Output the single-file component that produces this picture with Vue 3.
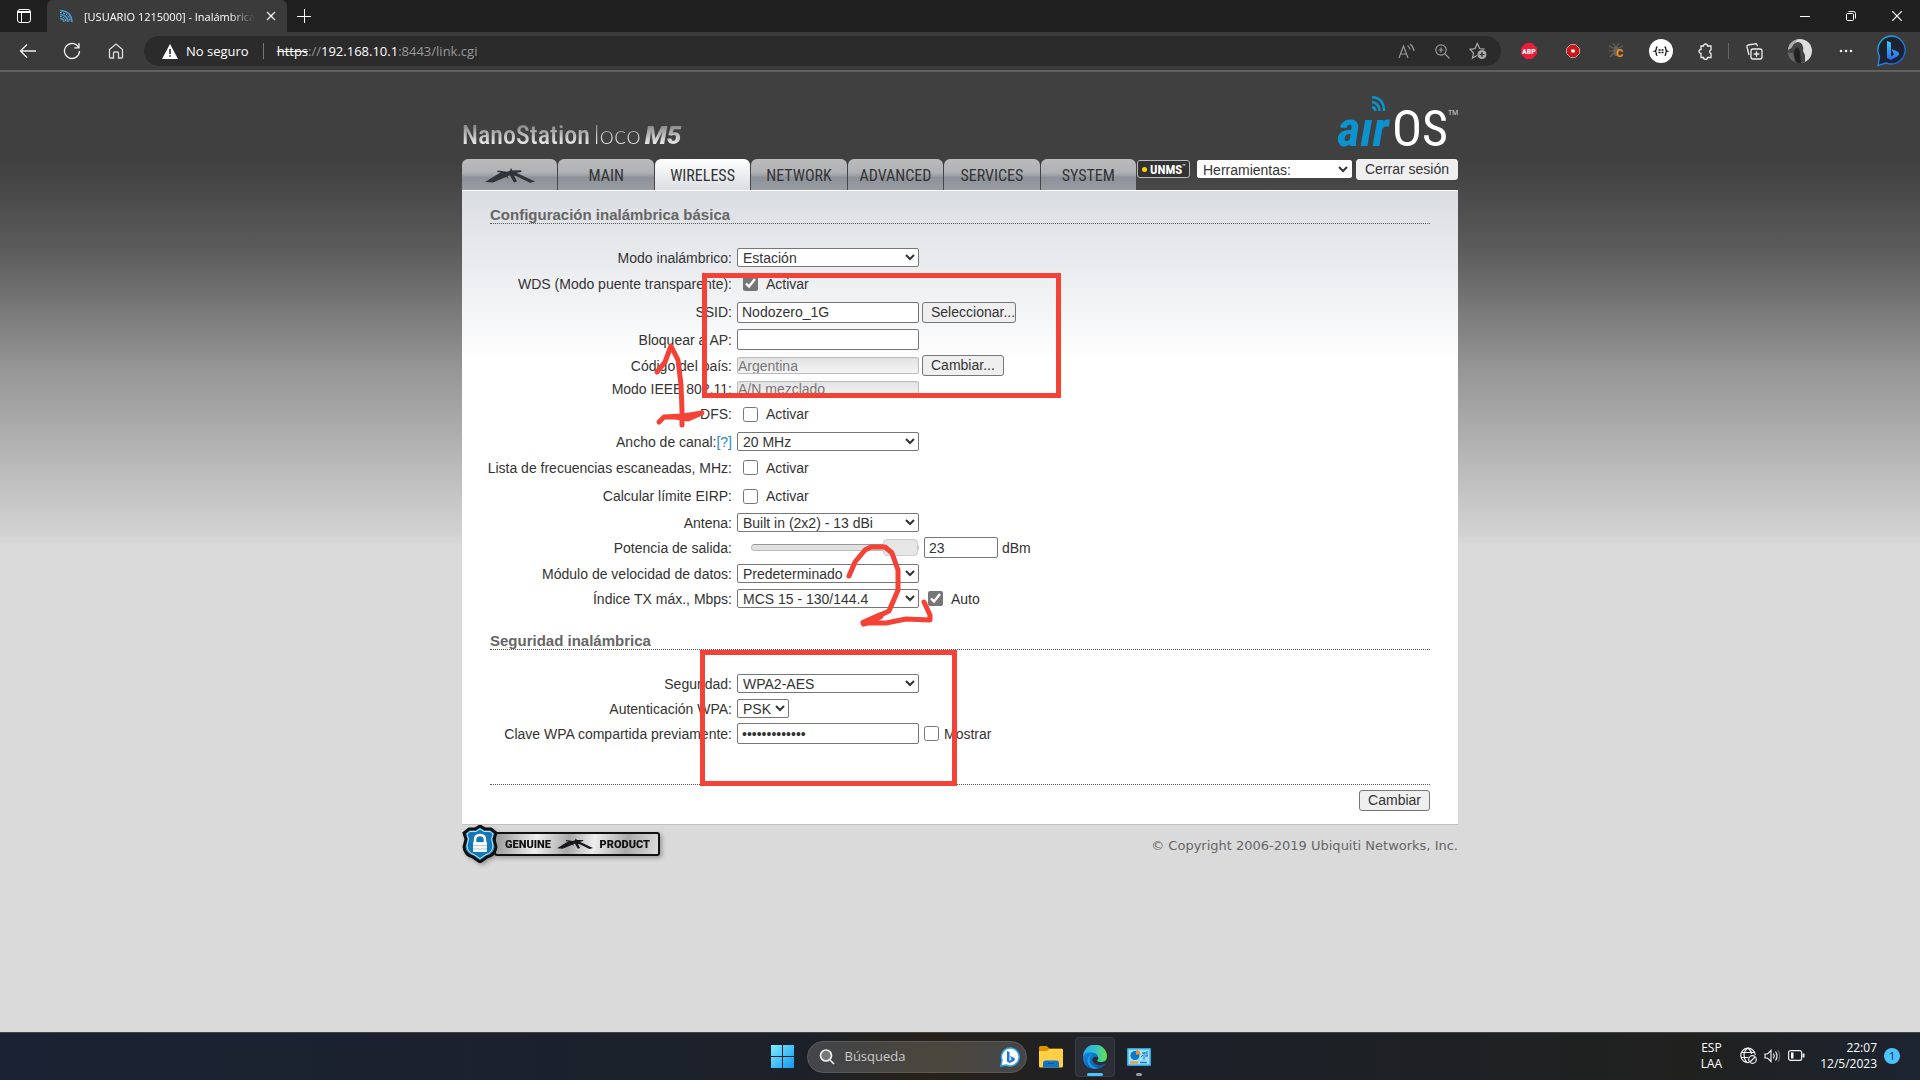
<script setup>
import { ref } from 'vue'

const tabs = ['', 'MAIN', 'WIRELESS', 'NETWORK', 'ADVANCED', 'SERVICES', 'SYSTEM']
const active = ref('WIRELESS')
const wds = ref(true)
const ssid = ref('Nodozero_1G')
const lockAp = ref('')
const dfs = ref(false)
const scanList = ref(false)
const eirp = ref(false)
const power = ref('23')
const auto = ref(true)
const psk = ref('clavesecreta1')
const show = ref(false)
</script>

<template>
  <div class="screen">
    <header class="browser">
      <div class="tabstrip">
        <button class="tab-menu" aria-label="Menú de pestañas">
          <svg width="16" height="16" viewBox="0 0 16 16" fill="none" stroke="#fff"><rect x="1.5" y="1.5" width="13" height="13" rx="2.5" /><path d="M2 3.5h12M2 4.5h12M5.500 5v9" /></svg>
        </button>
        <div class="browser-tab">
          <svg class="favicon" width="14" height="14" viewBox="0 0 14 14" fill="none" stroke="#3d9ad6" stroke-width="1.600"><path d="M1 1.500Q12.500 2 13 13M1 5.500Q8.500 6 9 13M1 9.500Q5 10 5 13" /><path d="M1 3.500Q10.500 4 11 13M1 7.500Q6.500 8 7 13" stroke-width=".8" stroke="#a9d6f2" stroke-dasharray="2 1" /></svg>
          <span class="tab-title">[USUARIO 1215000] - Inalámbrica</span>
          <button class="tab-close" aria-label="Cerrar pestaña"><svg width="10" height="10" viewBox="0 0 10 10" stroke="#fff" stroke-width="1.300"><path d="M1 1l8 8M9 1l-8 8" /></svg></button>
        </div>
        <button class="new-tab" aria-label="Nueva pestaña"><svg width="14" height="14" viewBox="0 0 14 14" stroke="#fff"><path d="M7.500 0v14M0 7.500h14" /></svg></button>
        <div class="window-buttons">
          <button aria-label="Minimizar"><svg width="10" height="10" viewBox="0 0 10 10" stroke="#fff"><path d="M0 5.500h10" /></svg></button>
          <button aria-label="Restaurar"><svg width="10" height="10" viewBox="0 0 10 10" stroke="#fff" fill="none"><rect x=".5" y="2.500" width="7" height="7" rx="1" /><path d="M2.500 .5h5q2 0 2 2v5" /></svg></button>
          <button aria-label="Cerrar"><svg width="10" height="10" viewBox="0 0 10 10" stroke="#fff" stroke-width="1.200"><path d="M0 0l10 10M10 0L0 10" /></svg></button>
        </div>
      </div>
      <div class="toolbar">
        <button class="nav-btn" aria-label="Atrás"><svg width="18" height="16" viewBox="0 0 18 16" fill="none" stroke="#eee" stroke-width="1.300"><path d="M17 8H1.500M8 1.500L1.500 8L8 14.500" /></svg></button>
        <button class="nav-btn" aria-label="Actualizar"><svg width="18" height="18" viewBox="0 0 18 18" fill="none" stroke="#eee" stroke-width="1.300"><path d="M16.500 9a7.500 7.500 0 1 1-2.600-5.700L16 5.500M16 1v4.800h-4.800" /></svg></button>
        <button class="nav-btn" aria-label="Inicio"><svg width="16" height="16" viewBox="0 0 16 16" fill="none" stroke="#ddd" stroke-width="1.300"><path d="M1.500 6.500L8 1l6.500 5.500V14q0 1-1 1H10.500V10q0-1-1-1h-3q-1 0-1 1v5H2.500q-1 0-1-1z" /></svg></button>
        <div class="address">
          <svg width="16" height="15" viewBox="0 0 16 15"><path d="M8 0l8 15H0z" fill="#fff" /><path d="M7.200 5h1.600v5H7.200zM7.200 11.200h1.600v1.600H7.200z" fill="#2b2b2b" /></svg>
          <span class="insecure">No seguro</span>
          <span class="sep"></span>
          <span class="url"><s>https</s>://<b>192.168.10.1</b>:8443/link.cgi</span>
          <span class="address-icons">
            <button aria-label="Leer en voz alta"><svg width="17" height="16" viewBox="0 0 17 16" fill="none" stroke="#999" stroke-width="1.200"><path d="M1 15L5.500 3L10 15M2.500 11h6M9.500 2.500q2 1.500 2.500 4M12 1q3.500 2.500 4 7" /></svg></button>
            <button aria-label="Zoom"><svg width="15" height="15" viewBox="0 0 15 15" fill="none" stroke="#999" stroke-width="1.200"><circle cx="6" cy="6" r="5.200" /><path d="M10 10l4.500 4.500M6 3.500v5M3.500 6h5" /></svg></button>
            <button aria-label="Favoritos"><svg width="18" height="18" viewBox="0 0 18 18" fill="none" stroke="#aaa" stroke-width="1.200"><path d="M8 13.500L3.500 16l1-5L1 7.200l5-.6L8.300 1.500l2.300 5 5 .7" /><circle cx="13" cy="12.500" r="4.500" fill="#aaa" stroke="none" /><path d="M13 10v5M10.500 12.500h5" stroke="#2b2b2b" /></svg></button>
          </span>
        </div>
        <div class="extensions">
          <button aria-label="Adblock Plus"><svg width="16" height="16" viewBox="0 0 16 16"><path d="M5 0h6l5 5v6l-5 5H5l-5-5V5z" fill="#ee1c3c" /><text x="8" y="11" text-anchor="middle" font-family="Roboto Condensed, Roboto, sans-serif" font-size="8" font-weight="700" fill="#fff">ABP</text></svg></button>
          <button aria-label="Grabador"><svg width="14" height="14" viewBox="0 0 14 14"><path d="M4.500 .5h5l4 4v5l-4 4h-5l-4-4v-5z" fill="#d01418" stroke="#aaa" /><rect x="5" y="5.500" width="4" height="3" rx="1" fill="#fff" /></svg></button>
          <button aria-label="Depurador"><svg width="18" height="20" viewBox="0 0 18 20" fill="none" stroke="#6d6258" stroke-width="1.200"><ellipse cx="8" cy="10" rx="2.500" ry="5" fill="#6d6258" stroke="none" /><path d="M5 2l2 3M11 2L9 5M1 5l4 2 6 0 4-2M1 10h5M2 16l4-4M11 10h3" /><text x="8" y="16" font-family="Roboto, sans-serif" font-size="11" font-weight="700" fill="#f79324" stroke="none">C</text></svg></button>
          <button aria-label="JSON"><svg width="24" height="24" viewBox="0 0 24 24"><circle cx="12" cy="12" r="12" fill="#fff" /><path d="M8.500 8Q7 8 7.300 10q0 1.800-1.500 2.200 1.500.4 1.500 2.300-.3 1.900 1.200 1.900M15.500 8q1.500 0 1.200 2 0 1.800 1.500 2.200-1.500.4-1.500 2.300.3 1.900-1.200 1.900" fill="none" stroke="#111" stroke-width="1.300" /><path d="M9.500 11h5M9.500 13.500h5" stroke="#111" stroke-width="1.300" stroke-dasharray="2 1" /></svg></button>
          <button aria-label="Extensiones"><svg width="15" height="17" viewBox="0 0 15 17" fill="none" stroke="#eee" stroke-width="1.300"><path d="M3 3h2.500a2 2 0 0 1 4 0H13v3.800a2 2 0 0 0 0 3.800V14.500H9.500a2 2 0 0 1-4 0H3V10.500a2 2 0 0 1 0-4z" /></svg></button>
        </div>
        <span class="bar-sep"></span>
        <div class="profile">
          <button aria-label="Colecciones"><svg width="17" height="17" viewBox="0 0 17 17" fill="none" stroke="#eee" stroke-width="1.300"><rect x="5" y="6" width="11" height="10" rx="2" /><path d="M10.500 8.200v5.600M7.700 11h5.600M3 12L1 4q-.4-1.600 1-2l7-1.200q1.500-.2 2 1l.5 1.500" /></svg></button>
          <button aria-label="Perfil"><svg width="24" height="24" viewBox="0 0 24 24"><defs><clipPath id="avatar"><circle cx="12" cy="12" r="12" /></clipPath></defs><g clip-path="url(#avatar)"><rect width="24" height="24" fill="#ddd" /><path d="M0 0h9l-2 5L0 11z" fill="#aaa" /><path d="M0 11Q4 9 6 5q4-4 8 0 2 4 1 7l2 4v8H0z" fill="#444" /><path d="M7 10l3-2 2 5 1 11H8L6 15z" fill="#222" /><path d="M0 14h5l2 10H0z" fill="#666" /></g></svg></button>
          <button aria-label="Más"><svg width="14" height="4" viewBox="0 0 14 4" fill="#eee"><circle cx="2" cy="2" r="1.300" /><circle cx="7" cy="2" r="1.300" /><circle cx="12" cy="2" r="1.300" /></svg></button>
          <button aria-label="Bing"><svg width="30" height="32" viewBox="0 0 30 32"><defs><linearGradient id="bingRing" x2="1" y2="1"><stop stop-color="#27b4dd" /><stop offset="1" stop-color="#1b55dd" /></linearGradient><linearGradient id="bingB" x2="0" y2="1"><stop stop-color="#3ad0f4" /><stop offset="1" stop-color="#2867ef" /></linearGradient></defs><path d="M15 1a14 14 0 1 1-6 27L1 30.500l1.500-9A14 14 0 0 1 15 1z" fill="#1c2230" stroke="url(#bingRing)" stroke-width="1.400" /><path d="M10 6l4 1.500v14l-4-2zM14 21.500l3-2-2.500-5.500 7 3q1.500 2-.5 4l-7 4-4-2v-3.500z" fill="url(#bingB)" /></svg></button>
        </div>
      </div>
    </header>

    <main class="page">
      <div class="device">
        <div class="brand">
          <div class="product"><span class="nano">NanoStation</span><span class="loco">loco</span><span class="m5">M5</span></div>
          <div class="airos">
            <span class="air">aır<svg class="waves" width="18" height="18" viewBox="0 0 18 18" fill="none" stroke="#0a93cf" stroke-width="2.400"><path d="M3 2Q15 3 15 16M3 7q7 1 7.500 9M3 12q3 .5 3.500 4" /></svg></span><span class="os">OS</span><sup class="tm">TM</sup>
          </div>
        </div>
        <nav class="nav">
          <div class="tabs">
            <button v-for="t in tabs" :key="t" class="tab" :class="{ active: t === active }" @click="active = t || active">
              <template v-if="t">{{ t }}</template>
              <svg v-else width="50" height="16" viewBox="0 0 50 16" fill="#30333a"><path d="M0 14L13 6l3-1.500-4-.5 1-1.500 9 1.200 3-1L26 0l1.500 2.500L36 2.300l.5 1.700-5 .8L36 7l14 6.500-5 1.300L31 8l-2-.5 3 6-3 1-4-7-2.500.5 1 2.500-2.500-1.500L8 14.500z" /></svg>
            </button>
          </div>
          <a class="unms" href="#unms"><span class="dot"></span>UNMS<sup>™</sup></a>
          <select class="tools" aria-label="Herramientas"><option>Herramientas:</option></select>
          <button class="btn logout">Cerrar sesión</button>
        </nav>

        <form class="panel" @submit.prevent>
          <h2>Configuración inalámbrica básica</h2>
          <div class="rows basic">
            <div class="row"><label for="mode">Modo inalámbrico:</label><div class="field"><select id="mode"><option>Estación</option></select></div></div>
            <div class="row md"><span class="name">WDS (Modo puente transparente):</span><div class="field"><label class="check"><input v-model="wds" type="checkbox">Activar</label></div></div>
            <div class="row lg"><label for="ssid">SSID:</label><div class="field"><input id="ssid" v-model="ssid" type="text"><button class="btn browse">Seleccionar...</button></div></div>
            <div class="row"><label for="ap">Bloquear a AP:</label><div class="field"><input id="ap" v-model="lockAp" type="text"></div></div>
            <div class="row md"><label for="country">Código del país:</label><div class="field"><input id="country" class="fixed" type="text" value="Argentina" disabled><button class="btn">Cambiar...</button></div></div>
            <div class="row xs"><label for="ieee">Modo IEEE 802.11:</label><div class="field"><input id="ieee" class="fixed" type="text" value="A/N mezclado" disabled></div></div>
            <div class="row lg"><span class="name">DFS:</span><div class="field"><label class="check"><input v-model="dfs" type="checkbox">Activar</label></div></div>
            <div class="row"><label for="width">Ancho de canal:<a href="#ayuda">[?]</a></label><div class="field"><select id="width"><option>20 MHz</option></select></div></div>
            <div class="row md"><span class="name">Lista de frecuencias escaneadas, MHz:</span><div class="field"><label class="check"><input v-model="scanList" type="checkbox">Activar</label></div></div>
            <div class="row lg"><span class="name">Calcular límite EIRP:</span><div class="field"><label class="check"><input v-model="eirp" type="checkbox">Activar</label></div></div>
            <div class="row sm"><label for="antenna">Antena:</label><div class="field"><select id="antenna"><option>Built in (2x2) - 13 dBi</option></select></div></div>
            <div class="row md"><label for="power">Potencia de salida:</label><div class="field"><input class="slider" type="range" min="0" max="23" v-model="power" aria-label="Potencia"><input id="power" v-model="power" class="short" type="text"><span class="unit">dBm</span></div></div>
            <div class="row"><label for="rate">Módulo de velocidad de datos:</label><div class="field"><select id="rate"><option>Predeterminado</option></select></div></div>
            <div class="row"><label for="tx">Índice TX máx., Mbps:</label><div class="field"><select id="tx"><option>MCS 15 - 130/144.4</option></select><label class="check"><input v-model="auto" type="checkbox">Auto</label></div></div>
          </div>
          <h2>Seguridad inalámbrica</h2>
          <div class="rows security">
            <div class="row"><label for="security">Seguridad:</label><div class="field"><select id="security"><option>WPA2-AES</option></select></div></div>
            <div class="row"><label for="auth">Autenticación WPA:</label><div class="field"><select id="auth" class="narrow"><option>PSK</option></select></div></div>
            <div class="row"><label for="key">Clave WPA compartida previamente:</label><div class="field"><input id="key" v-model="psk" :type="show ? 'text' : 'password'"><label class="check tight"><input v-model="show" type="checkbox">Mostrar</label></div></div>
          </div>
          <div class="actions"><button class="btn">Cambiar</button></div>
        </form>

        <footer class="footer">
          <div class="genuine">
            <svg class="shield" width="36" height="38" viewBox="0 0 36 38"><path d="M18 1l5 3 6 0 5 4-2 6 2 8q-1 8-9 10l-7 5-7-5Q3 30 2 22l2-8-2-6 5-4 6 0z" fill="#3596d0" stroke="#111" stroke-width="3" /><path d="M18 4l4 2.500 6 0 3 2.500-1.500 5 1.500 7q-1 7-7 8.500l-6 4-6-4Q6 28 5 21l1.500-7L5 9l3-2.500 6 0z" fill="#1577b8" stroke="#bfe2f5" /><path d="M13 18v-3q0-5 5-5t5 5v3" fill="none" stroke="#fff" stroke-width="2.500" /><rect x="11" y="17" width="14" height="10" rx="1" fill="#f4faff" /><path d="M11 20.500h14M11 24h14" stroke="#a8cfe8" /></svg>
            <span class="plate">GENUINE<svg width="36" height="12" viewBox="0 0 50 16" fill="#16181c"><path d="M0 14L13 6l3-1.500-4-.5 1-1.500 9 1.200 3-1L26 0l1.500 2.500L36 2.300l.5 1.700-5 .8L36 7l14 6.500-5 1.300L31 8l-2-.5 3 6-3 1-4-7-2.500.5 1 2.500-2.500-1.500L8 14.500z" /></svg>PRODUCT</span>
          </div>
          <small>© Copyright 2006-2019 Ubiquiti Networks, Inc.</small>
        </footer>

        <svg class="marks" width="996" height="752" viewBox="462 72 996 752" fill="none" stroke="#f44336" stroke-width="5" stroke-linecap="round" stroke-linejoin="round" aria-hidden="true">
          <path d="M704.500 275.500h354v120h-354zM702.500 652.500h252v131h-252z" stroke-linejoin="miter" />
          <path d="M657 372L665 362L671 346L678 360L681 385L682 410V425" />
          <path d="M659 422L664 417L683 416L702 413L688 419L675 417" />
          <path d="M849 576L855 562L865 550L871 547L885 547L892 553L898 570L898 590L889 611L876 617L864 623L886 623L906 619L930 620L930 615L924 602" />
          <path d="M864 623L880 616" stroke-width="7" />
        </svg>
      </div>
    </main>

    <footer class="taskbar">
      <div></div>
      <div class="apps">
        <button aria-label="Inicio"><svg width="23" height="23" viewBox="0 0 23 23"><defs><linearGradient id="win" x2="1" y2="1"><stop stop-color="#80edfc" /><stop offset="1" stop-color="#1197f2" /></linearGradient></defs><path d="M0 0h11v11H0zM12 0h11v11H12zM0 12h11v11H0zM12 12h11v11H12z" fill="url(#win)" /></svg></button>
        <label class="search">
          <svg width="16" height="16" viewBox="0 0 16 16" fill="none" stroke="#eee" stroke-width="1.700"><circle cx="7" cy="6.500" r="5.500" fill="#777" /><path d="M11 11l4 4" /></svg>
          <input type="text" placeholder="Búsqueda" aria-label="Búsqueda">
          <svg width="20" height="20" viewBox="0 0 20 20"><path d="M10 1a9 9 0 1 1-4 17l-5 1 1-6A9 9 0 0 1 10 1z" fill="#fff" stroke="#31a9e5" stroke-width="1.500" /><path d="M7 4l2.500 1v9L7 12.500zM9.500 14l2-1.500L10 9l4.500 2q1 1.500-.5 3L9.500 16 7 14.500V12z" fill="#1b76df" /></svg>
        </label>
        <button aria-label="Explorador"><svg width="24" height="22" viewBox="0 0 24 22"><path d="M0 1.500Q0 0 1.500 0H8l2 2.500h12.500q1.500 0 1.500 1.500v5H0z" fill="#dd9300" /><path d="M0 5h8l2-2h14v17q0 1.500-1.500 1.500h-21Q0 21.500 0 20z" fill="#ffcf46" /><path d="M4 21.500V17q0-2.500 2.500-2.500h11Q20 14.500 20 17v4.500z" fill="#1176cb" /><path d="M9 17.500h6" stroke="#0a4e91" /></svg></button>
        <button class="current" aria-label="Edge"><svg width="24" height="24" viewBox="0 0 24 24"><defs><linearGradient id="edgeTop"><stop stop-color="#2ba6e8" /><stop offset=".5" stop-color="#30c3d0" /><stop offset="1" stop-color="#67e24a" /></linearGradient><linearGradient id="edgeLow" x2="1" y2="1"><stop stop-color="#1288dd" /><stop offset="1" stop-color="#0c4ca5" /></linearGradient></defs><path d="M0 12A12 12 0 0 1 24 11q0 6-6 6-3 0-4-1 2-2 1-4-2-5-8-4-5 1-7 4z" fill="url(#edgeTop)" /><path d="M0 13Q1 7 8 7.500q6 .5 7 4.500-3-1-5 1t1 5q4 4 12 .5Q19 24 12 24 1 24 0 13z" fill="url(#edgeLow)" /><path d="M9 9q-4 5-1 10 3 4 8 4-3 1-6 .5Q4 21 4.500 15 5 11 9 9z" fill="#1b9de2" /></svg></button>
        <button class="open" aria-label="Panel de control"><svg width="24" height="18" viewBox="0 0 24 18"><rect width="24" height="18" rx="1" fill="#2ba5e0" /><rect x="1.500" y="1.500" width="21" height="15" fill="#9de0fa" /><circle cx="8" cy="7.500" r="4.500" fill="#1177c4" /><path d="M9 6.500V2a4.500 4.500 0 0 1 4.500 4.500z" fill="#f79023" /><path d="M14 9l2-2M15 5h5M18 8h3M17 4v8M20 3v5" stroke="#1979be" /><path d="M3 14.500h8" stroke="#f79023" stroke-width="2" /><path d="M13 14.500h7" stroke="#1979be" stroke-width="1.500" /></svg></button>
      </div>
      <div class="tray">
        <span class="lang">ESP<br>LAA</span>
        <svg width="17" height="17" viewBox="0 0 17 17" fill="none" stroke="#eee" stroke-width="1.200"><path d="M9 15.500A7.200 7.200 0 1 1 15.200 8M8 1Q4 4 4 8t3 7.500M8 1q3.500 3 3.700 6M1.500 5.500h13M1.500 10.500h7" /><circle cx="12.500" cy="12.500" r="3.800" /><path d="M10 15l5-5" /></svg>
        <svg width="17" height="14" viewBox="0 0 17 14" fill="none" stroke="#eee" stroke-width="1.200"><path d="M1 5h2.500L7 1.500v11L3.500 9H1zM9.500 4.500q1.500 2.500 0 5M11.500 2.500q3 4.500 0 9" /><path d="M14 1q3.500 6 0 12" stroke="#666" /></svg>
        <svg width="17" height="11" viewBox="0 0 17 11" fill="none" stroke="#eee" stroke-width="1.200"><rect x=".6" y=".6" width="13" height="9.800" rx="2" /><path d="M15.500 3.500v4" stroke-width="2" /><path d="M3 2.500h2.500v6H3z" fill="#fff" stroke="none" /></svg>
        <span class="clock">22:07<br>12/5/2023</span>
        <span class="badge">1</span>
      </div>
    </footer>
  </div>
</template>

<style>
body { margin: 0; background: #dadada; }
</style>

<style scoped>
.screen { min-height: 100vh; display: flex; flex-direction: column; font-family: "Liberation Sans", Arial, sans-serif; font-size: 14px; color: #333; }
.screen * { box-sizing: border-box; }
button { font: inherit; color: inherit; cursor: pointer; }
svg { flex: none; display: block; }

.browser { font-family: "Open Sans", "Noto Sans", sans-serif; color: #fff; background: #3b3b3b; border-bottom: 2px solid #606060; }
.browser button { border: 0; padding: 0; background: none; display: flex; align-items: center; justify-content: center; }
.tabstrip { display: flex; height: 32px; background: #202020; }
.tab-menu { width: 47px; }
.browser-tab { width: 240px; display: flex; align-items: center; gap: 11px; padding: 0 11px 0 12px; background: #3b3b3b; border-radius: 6px 6px 0 0; font-size: 11px; }
.tab-title { flex: 1; overflow: hidden; white-space: nowrap; mask-image: linear-gradient(90deg, #000 85%, transparent); }
.new-tab { width: 34px; }
.window-buttons { display: flex; margin-left: auto; }
.window-buttons button { width: 46px; }
.toolbar { display: flex; align-items: center; height: 38px; padding: 0 5px 0 6px; }
.nav-btn { width: 44px; height: 30px; }
.address { flex: 1; display: flex; align-items: center; height: 30px; margin: 0 6px; padding: 0 5px 0 18px; border-radius: 15px; background: #2b2b2b; font-size: 13px; }
.insecure { margin-left: 8px; }
.sep { width: 1px; height: 16px; margin: 0 13px 0 14px; background: #777; }
.url { color: #999; }
.url b, .url s { color: #fff; font-weight: 400; }
.address-icons { display: flex; margin-left: auto; }
.address-icons button { width: 36px; }
.extensions, .profile { display: flex; }
.extensions button { width: 44px; height: 36px; }
.profile button { width: 46px; height: 36px; }
.bar-sep { width: 1px; height: 16px; margin: 0 2px 0 1px; background: #666; }

.page { flex: 1; background: #dadada linear-gradient(#404040 0, #404040 90px, #5a5a5a 173px, #979797 300px, #d6d6d6 471px, #dadada 472px) no-repeat 0 0 / 100% 472px; }
.device { position: relative; max-width: 996px; margin: 0 auto; }
.brand { display: flex; justify-content: space-between; align-items: flex-end; height: 87px; }
.product { display: flex; align-items: baseline; padding-bottom: 8px; line-height: 32px; }
.product span { background: linear-gradient(#888 20%, #eee 80%); background-clip: text; color: transparent; }
.nano { font-family: "Roboto Condensed", Roboto, sans-serif; font-size: 26px; font-weight: 500; }
.loco { margin-left: 4px; font-family: Lato, sans-serif; font-weight: 300; font-size: 26px; }
.m5 { margin-left: 4px; padding-right: 4px; font-family: Roboto, sans-serif; font-size: 26px; font-weight: 900; font-style: italic; }
.airos { display: flex; align-items: baseline; padding-bottom: 6px; line-height: 48px; }
.air { position: relative; color: #0a93cf; font-family: "Roboto Condensed", Roboto, sans-serif; font-size: 50px; font-weight: 700; font-style: italic; }
.waves { position: absolute; right: 2px; top: -10px; }
.os { margin-left: 3px; color: #fff; font-family: "Roboto Condensed", Roboto, sans-serif; font-size: 50px; }
.tm { align-self: flex-start; color: #ddd; font-size: 7px; line-height: 16px; }

.nav { display: flex; align-items: flex-start; height: 31px; }
.tabs { display: flex; flex: none; gap: 1px; width: 674px; height: 31px; }
.tab { flex: 1; display: flex; align-items: center; justify-content: center; min-width: 0; padding: 2px 0 0; border: 0; border-radius: 6px 6px 0 0; background: linear-gradient(#bcbcbc, #aeb0b3 45%, #8d9199 60%, #989ca3); color: #333; font-family: "Roboto Condensed", Roboto, sans-serif; font-size: 16px; }
.tab.active { background: linear-gradient(#fff, #dadde2); }
.unms { display: flex; flex: none; align-items: center; height: 18px; width: 53px; margin: 1px 7px 0 1px; padding-left: 4px; border: 1px solid #bbb; border-radius: 3px; background: #333; color: #fff; font-family: "Roboto Condensed", Roboto, sans-serif; font-size: 13px; font-weight: 700; text-decoration: none; }
.unms sup { font-size: 6px; line-height: 6px; align-self: flex-start; padding-top: 2px; }
.dot { width: 5px; height: 5px; margin-right: 3px; border-radius: 50%; background: #ffd200; }

select, input[type="text"], input[type="password"] { width: 182px; margin: 0; border: 1px solid #767676; border-radius: 2px; background-color: #fff; color: #333; font: 14px "Liberation Sans", Arial, sans-serif; }
select { height: 19px; padding: 0 0 0 1px; }
input[type="text"], input[type="password"] { height: 21px; padding: 0 4px; }
select.tools { flex: none; width: 155px; margin: 1px 4px 0 0; border-color: #fff; height: 18px; }
.btn { height: 21px; padding: 0 8px; border: 1px solid #767676; border-radius: 3px; background: #efefef; line-height: 19px; white-space: nowrap; }
.logout { margin-left: auto; border-color: #efefef; }

.panel { padding: 11px 28px 13px; border-top: 1px solid #fff; border-bottom: 1px solid #c0c0c0; background: linear-gradient(#dadde2, #fff 172px); }
h2 { margin: 0; height: 22px; border-bottom: 1px dotted #555; color: #666; font-size: 15px; line-height: 26px; }
.rows { margin-left: -10px; }
.rows.basic { padding: 21px 0 17px; }
.rows.security { padding: 21px 0 38px; }
.row { display: flex; align-items: center; height: 25px; }
.row.xs { height: 20px; }
.row.sm { height: 23px; }
.row.md { height: 27px; }
.row.lg { height: 30px; }
.row > label, .name { width: 252px; text-align: right; white-space: nowrap; }
.row a { color: #2a86c8; text-decoration: none; }
.field { display: flex; align-items: center; margin-left: 5px; }
.field .btn { margin-left: 3px; }
.field .browse { width: 94px; padding: 0 0 0 8px; text-align: left; }
.check { display: flex; align-items: center; gap: 8px; padding-left: 6px; }
.check input { width: 15px; height: 15px; margin: 0; accent-color: #767676; }
select + .check { padding-left: 9px; }
.check.tight { gap: 5px; padding-left: 5px; }
input.fixed[type="text"] { height: 17px; padding: 0; border-color: #bbb; background: linear-gradient(#e2e2e2, #f4f4f4); color: #777; }
.row.xs .fixed { height: 16px; }
select.narrow { width: 52px; }
input.short[type="text"] { width: 74px; margin-left: 5px; }
.unit { margin-left: 4px; }
.slider { appearance: none; width: 168px; height: 17px; margin: 0 0 0 14px; background: none; }
.slider::-webkit-slider-runnable-track { height: 7px; border: 1px solid #bbb; border-top-color: #999; border-radius: 4px; background: #e0e0e0; }
.slider::-webkit-slider-thumb { appearance: none; width: 35px; height: 17px; margin-top: -6px; border: 1px solid #ccc; border-radius: 4px; background: #e6e6e6; }
.actions { display: flex; justify-content: flex-end; padding-top: 5px; border-top: 1px dotted #555; }

.footer { display: flex; justify-content: space-between; align-items: flex-start; }
.footer small { padding-top: 11px; color: #666; font: 13px/20px Verdana, "DejaVu Sans", sans-serif; }
.genuine { display: flex; align-items: center; filter: drop-shadow(2px 2px 2px #999); }
.shield { position: relative; }
.plate { display: flex; align-items: center; justify-content: space-between; width: 166px; height: 24px; margin-left: -4px; padding: 0 8px 0 9px; border: 2px solid #111; border-radius: 3px; background: linear-gradient(100deg, #999, #eee 25%, #aaa 45%, #eee 60%, #aaa 80%, #ddd); color: #111; font-family: Roboto, sans-serif; font-size: 11px; font-weight: 900; }
.marks { position: absolute; left: 0; top: 0; pointer-events: none; }

.taskbar { display: grid; grid-template-columns: 1fr auto 1fr; align-items: center; height: 48px; border-top: 1px solid #444; background: linear-gradient(90deg, #1a2233, #1c2129 42%, #272219 48%, #1c2029 60%, #20211f 88%, #1c2430); color: #fff; font-family: "Open Sans", "Noto Sans", sans-serif; }
.apps { display: flex; align-items: center; gap: 4px; padding-left: 1px; }
.apps button { position: relative; display: flex; align-items: center; justify-content: center; width: 40px; height: 40px; padding: 0; border: 1px solid transparent; border-radius: 4px; background: none; }
.apps .current { border-color: #3a3d42; background: #2b2f35; }
.apps .current::after, .apps .open::after { content: ""; position: absolute; bottom: 0; width: 16px; height: 3px; border-radius: 2px; background: #4cc2ff; }
.apps .open::after { width: 6px; background: #999; }
.search { display: flex; align-items: center; gap: 10px; width: 220px; height: 32px; padding: 0 6px 0 11px; border: 1px solid #5a5a5a; border-radius: 16px; background: linear-gradient(90deg, #43454a, #4a463c 60%, #44464a); }
.search input[type="text"] { flex: 1; min-width: 0; padding: 0 0 2px; border: 0; background: none; color: #ddd; font: 13px "Open Sans", sans-serif; }
.search input::placeholder { color: #ccc; }
.tray { display: flex; align-items: center; justify-content: flex-end; padding: 0 20px 2px 0; font-size: 12px; line-height: 16px; }
.lang { margin-right: 18px; text-align: center; }
.tray svg { margin-right: 7px; }
.tray svg + .clock { margin-left: 8px; }
.clock { text-align: right; }
.badge { width: 16px; height: 16px; margin-left: 7px; border-radius: 50%; background: #4cc2ff; color: #123; text-align: center; font-size: 10px; }
</style>
